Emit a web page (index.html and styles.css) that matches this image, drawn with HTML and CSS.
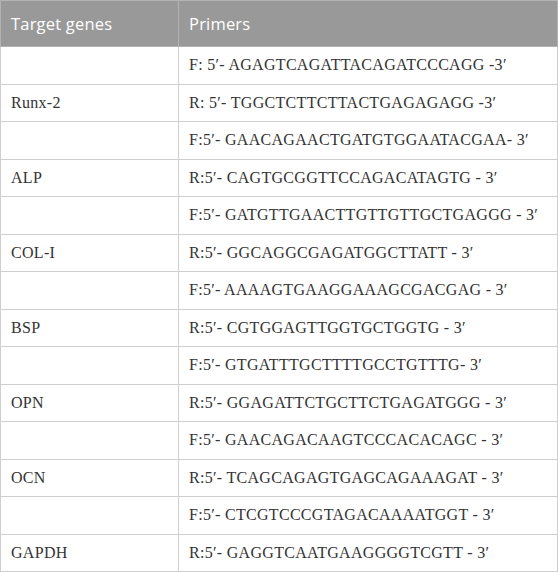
FILE: index.html
```html
<!DOCTYPE html>
<html>
<head>
<meta charset="utf-8">
<link rel="stylesheet" href="styles.css">
</head>
<body>
<table class="primers">
  <thead>
    <tr><th class="col-gene">Target genes</th><th>Primers</th></tr>
  </thead>
  <tbody>
    <tr><td class="cell"></td><td class="cell seq">F: 5′- AGAGTCAGATTACAGATCCCAGG -3′</td></tr>
    <tr><td class="cell">Runx-2</td><td class="cell seq">R: 5′- TGGCTCTTCTTACTGAGAGAGG -3′</td></tr>
    <tr><td class="cell"></td><td class="cell seq">F:5′- GAACAGAACTGATGTGGAATACGAA- 3′</td></tr>
    <tr><td class="cell">ALP</td><td class="cell seq">R:5′- CAGTGCGGTTCCAGACATAGTG - 3′</td></tr>
    <tr><td class="cell"></td><td class="cell seq">F:5′- GATGTTGAACTTGTTGTTGCTGAGGG - 3′</td></tr>
    <tr><td class="cell">COL-I</td><td class="cell seq">R:5′- GGCAGGCGAGATGGCTTATT - 3′</td></tr>
    <tr><td class="cell"></td><td class="cell seq">F:5′- AAAAGTGAAGGAAAGCGACGAG - 3′</td></tr>
    <tr><td class="cell">BSP</td><td class="cell seq">R:5′- CGTGGAGTTGGTGCTGGTG - 3′</td></tr>
    <tr><td class="cell"></td><td class="cell seq">F:5′- GTGATTTGCTTTTGCCTGTTTG- 3′</td></tr>
    <tr><td class="cell">OPN</td><td class="cell seq">R:5′- GGAGATTCTGCTTCTGAGATGGG - 3′</td></tr>
    <tr><td class="cell"></td><td class="cell seq">F:5′- GAACAGACAAGTCCCACACAGC - 3′</td></tr>
    <tr><td class="cell">OCN</td><td class="cell seq">R:5′- TCAGCAGAGTGAGCAGAAAGAT - 3′</td></tr>
    <tr><td class="cell"></td><td class="cell seq">F:5′- CTCGTCCCGTAGACAAAATGGT - 3′</td></tr>
    <tr><td class="cell">GAPDH</td><td class="cell seq">R:5′- GAGGTCAATGAAGGGGTCGTT - 3′</td></tr>
  </tbody>
</table>
</body>
</html>
```
FILE: styles.css
```css
html, body {
  margin: 0;
  padding: 0;
  background: #ffffff;
}

.primers {
  width: 558px;
  border-collapse: collapse;
  table-layout: fixed;
  font-family: "Liberation Serif", serif;
}

.primers th,
.primers td {
  border: 1px solid #cfcfcf;
  padding: 0 10px;
  text-align: left;
  vertical-align: middle;
  white-space: nowrap;
}

.primers .col-gene {
  width: 157px;
}

.primers th {
  height: 45px;
  background: #999999;
  color: #ffffff;
  font-family: "Open Sans", sans-serif;
  font-weight: 400;
  font-size: 16.5px;
  letter-spacing: 0.2px;
  border-color: #b3b3b3;
}

.cell {
  height: 36.5px;
  color: #333333;
  font-family: "Liberation Serif", serif;
  font-size: 16px;
  letter-spacing: 0.3px;
}

.seq {
  letter-spacing: 0.3px;
}
```
